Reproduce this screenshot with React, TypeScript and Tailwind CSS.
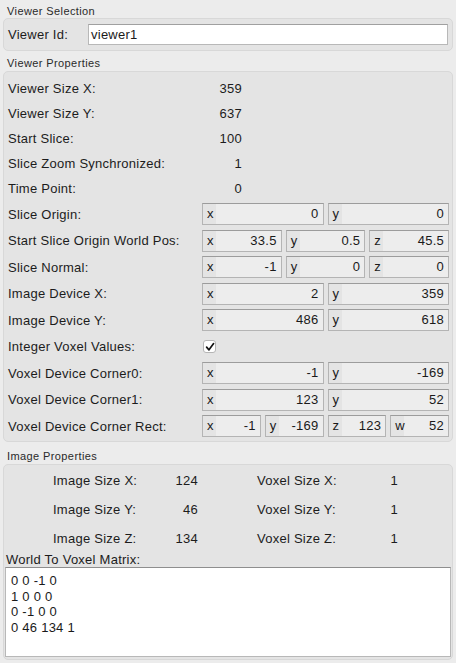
import React from "react";

const font = { fontFamily: '"Liberation Sans", Arial, sans-serif' };

function Title({ children, h, pt }: { children: React.ReactNode; h: string; pt: string }) {
  return (
    <div className={`${h} ${pt} pl-[7px] text-[11px] leading-[14px] tracking-[0.4px] text-[#2a2a2a]`}>{children}</div>
  );
}

function Field({ p, v }: { p: string; v: string }) {
  return (
    <div className="flex-1 min-w-0 h-[22px] flex border border-[#b4b4b4] border-t-[#9c9c9c] bg-[#ededed]">
      <div className="w-[13px] shrink-0 bg-[#e4e4e4] pl-[4px] leading-[20px] text-[#1a1a1a]">{p}</div>
      <div className="flex-1 text-right pr-[4px] leading-[20px] text-[#1a1a1a]">{v}</div>
    </div>
  );
}

function TextRow({ label, value }: { label: string; value: string }) {
  return (
    <div className="h-[25px] flex items-center">
      <div className="w-[194px] shrink-0">{label}</div>
      <div className="w-[40px] text-right">{value}</div>
    </div>
  );
}

function FieldRow({ label, fields }: { label: string; fields: [string, string][] }) {
  return (
    <div className="h-[26.5px] flex items-center">
      <div className="w-[194px] shrink-0">{label}</div>
      <div className="w-[247px] flex gap-[4px]">
        {fields.map(([p, v], i) => (
          <Field key={i} p={p} v={v} />
        ))}
      </div>
    </div>
  );
}

function ImgRow({ a, av, b, bv }: { a: string; av: string; b: string; bv: string }) {
  return (
    <div className="h-[29px] flex items-center pl-[49px]">
      <div className="w-[100px] shrink-0">{a}</div>
      <div className="w-[45px] shrink-0 text-right">{av}</div>
      <div className="w-[59px] shrink-0" />
      <div className="w-[100px] shrink-0">{b}</div>
      <div className="w-[41px] shrink-0 text-right">{bv}</div>
    </div>
  );
}

export default function App() {
  return (
    <div
      style={font}
      className="w-[456px] h-[663px] overflow-hidden bg-[#ececec] text-[13px] tracking-[0.25px] text-[#1c1c1c]"
    >
      <Title h="h-[18px]" pt="pt-[4px]">Viewer Selection</Title>
      <div className="mx-[3px] h-[33px] rounded-[5px] border border-[#d8d8d8] bg-[#e4e4e4] flex items-center pl-[4px] pr-[3px]">
        <div className="w-[80px] shrink-0">Viewer Id:</div>
        <div className="w-[360px] h-[21px] bg-white border border-[#b8b8b8] border-t-[#a0a0a0] pl-[2px] leading-[19px] text-[#1a1a1a]">
          viewer1
        </div>
      </div>

      <Title h="h-[20px]" pt="pt-[5px]">Viewer Properties</Title>
      <div className="mx-[3px] h-[371px] rounded-[5px] border border-[#d8d8d8] bg-[#e4e4e4] pl-[4px] pt-[4px]">
        <TextRow label="Viewer Size X:" value="359" />
        <TextRow label="Viewer Size Y:" value="637" />
        <TextRow label="Start Slice:" value="100" />
        <TextRow label="Slice Zoom Synchronized:" value="1" />
        <TextRow label="Time Point:" value="0" />
        <FieldRow label="Slice Origin:" fields={[["x", "0"], ["y", "0"]]} />
        <FieldRow label="Start Slice Origin World Pos:" fields={[["x", "33.5"], ["y", "0.5"], ["z", "45.5"]]} />
        <FieldRow label="Slice Normal:" fields={[["x", "-1"], ["y", "0"], ["z", "0"]]} />
        <FieldRow label="Image Device X:" fields={[["x", "2"], ["y", "359"]]} />
        <FieldRow label="Image Device Y:" fields={[["x", "486"], ["y", "618"]]} />
        <div className="h-[26.5px] flex items-center">
          <div className="w-[195px] shrink-0">Integer Voxel Values:</div>
          <div className="w-[13px] h-[13px] rounded-[3px] bg-white border border-[#b5b5b5] flex items-center justify-center">
            <svg width="10" height="10" viewBox="0 0 10 10">
              <path d="M1.6 5.2 L4 7.8 L8.6 1.6" fill="none" stroke="#111" strokeWidth="1.7" strokeLinecap="round" strokeLinejoin="round" />
            </svg>
          </div>
        </div>
        <FieldRow label="Voxel Device Corner0:" fields={[["x", "-1"], ["y", "-169"]]} />
        <FieldRow label="Voxel Device Corner1:" fields={[["x", "123"], ["y", "52"]]} />
        <FieldRow label="Voxel Device Corner Rect:" fields={[["x", "-1"], ["y", "-169"], ["z", "123"], ["w", "52"]]} />
      </div>

      <Title h="h-[22px]" pt="pt-[7px]">Image Properties</Title>
      <div className="mx-[3px] h-[196px] rounded-[5px] border border-[#d8d8d8] bg-[#e4e4e4] pt-[1px]">
        <ImgRow a="Image Size X:" av="124" b="Voxel Size X:" bv="1" />
        <ImgRow a="Image Size Y:" av="46" b="Voxel Size Y:" bv="1" />
        <ImgRow a="Image Size Z:" av="134" b="Voxel Size Z:" bv="1" />
        <div className="h-[13px] leading-[13px] pl-[2px]">World To Voxel Matrix:</div>
        <div className="mt-[1px] ml-[1px] w-[446px] h-[90px] bg-white border border-[#b8b8b8] border-t-[#8e8e8e] pl-[5px] pt-[5px] leading-[15.5px] whitespace-pre text-[#1a1a1a]">
          {"0 0 -1 0\n1 0 0 0\n0 -1 0 0\n0 46 134 1"}
        </div>
      </div>
    </div>
  );
}
